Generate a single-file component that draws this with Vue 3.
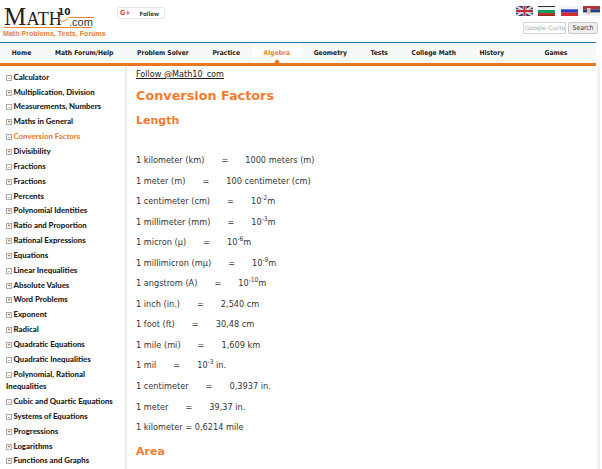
<script setup>
const nav = [
  { t: 'Home' }, { t: 'Math Forum/Help' }, { t: 'Problem Solver' },
  { t: 'Practice' }, { t: 'Algebra', active: true }, { t: 'Geometry' },
  { t: 'Tests' }, { t: 'College Math' }, { t: 'History' }, { t: 'Games' }
]
const side = [
  ['Calculator', 'm'], ['Multiplication, Division', 'p'], ['Measurements, Numbers', 'm'], ['Maths in General', 'p'],
  ['Conversion Factors', 'm', true], ['Divisibility', 'p'], ['Fractions', 'm'], ['Fractions', 'p'], ['Percents', 'm'],
  ['Polynomial Identities', 'p'], ['Ratio and Proportion', 'p'], ['Rational Expressions', 'p'], ['Equations', 'p'],
  ['Linear Inequalities', 'm'], ['Absolute Values', 'p'], ['Word Problems', 'p'], ['Exponent', 'p'], ['Radical', 'p'],
  ['Quadratic Equations', 'p'], ['Quadratic Inequalities', 'm'], ['Polynomial, Rational Inequalities', 'm'],
  ['Cubic and Quartic Equations', 'm'], ['Systems of Equations', 'm'], ['Progressions', 'p'], ['Logarithms', 'p'], ['Functions and Graphs', 'p']
]
const rows = [
  ['1 kilometer (km)', '1000 meters (m)'], ['1 meter (m)', '100 centimeter (cm)'],
  ['1 centimeter (cm)', '10', '-2', 'm'], ['1 millimeter (mm)', '10', '-3', 'm'],
  ['1 micron (µ)', '10', '-6', 'm'], ['1 millimicron (mµ)', '10', '-9', 'm'],
  ['1 angstrom (A)', '10', '-10', 'm'], ['1 inch (in.)', '2,540 cm'], ['1 foot (ft)', '30,48 cm'],
  ['1 mile (mi)', '1,609 km'], ['1 mil', '10', '-3', ' in.'], ['1 centimeter', '0,3937 in.'], ['1 meter', '39,37 in.']
]
</script>

<template>
  <div class="page">
    <header class="top">
      <div class="logo">
        <div class="logo-main">
          <span class="m">Math</span>
          <div class="logo-side">
            <svg class="check" width="12" height="8" viewBox="0 0 12 8"><path d="M1 1L5 6L11 3" fill="none" stroke="#e8873c" stroke-width="1"/></svg>
            <span class="ten">10</span>
            <span class="com">.com</span>
          </div>
        </div>
        <div class="tag">Math Problems, Tests, Forums</div>
      </div>
      <div class="follow"><span class="gp">G+</span><span>Follow</span></div>
      <div class="tools">
        <div class="flags">
          <svg width="17" height="10" viewBox="0 0 17 10"><rect width="17" height="10" fill="#2b3a78"/><path d="M0 0L17 10M17 0L0 10" stroke="#ddd" stroke-width="2"/><path d="M8.5 0V10M0 5H17" stroke="#ddd" stroke-width="3.5"/><path d="M8.5 0V10M0 5H17" stroke="#c8283c" stroke-width="2"/></svg>
          <svg width="17" height="10" viewBox="0 0 17 10"><rect width="17" height="10" fill="#2f2f2f"/><rect y="1" width="17" height="3" fill="#f4f4f4"/><rect y="4" width="17" height="3" fill="#159a62"/><rect y="7" width="17" height="2.5" fill="#c92f26"/></svg>
          <svg width="17" height="10" viewBox="0 0 17 10"><rect width="17" height="3.4" fill="#f4f4f4"/><rect y="3.3" width="17" height="3.4" fill="#2a3cc0"/><rect y="6.6" width="17" height="3.4" fill="#d32a2a"/></svg>
          <svg width="17" height="10" viewBox="0 0 17 10"><rect width="17" height="3.4" fill="#b5353f"/><rect y="3.3" width="17" height="3.4" fill="#26407c"/><rect y="6.6" width="17" height="3.4" fill="#f0f0f0"/><rect x="4" y="2" width="3.5" height="6" fill="#d8c4a8"/></svg>
        </div>
        <div class="search"><div class="input">Google Custo</div><div class="btn">Search</div></div>
      </div>
    </header>
    <nav class="nav">
      <a v-for="n in nav" :key="n.t" :class="{ on: n.active }">{{ n.t }}</a>
    </nav>
    <div class="body">
      <aside class="side">
        <div v-for="(s, i) in side" :key="i" class="item" :class="{ cur: s[2] }">
          <span class="box">{{ s[1] === 'm' ? '−' : '+' }}</span>{{ s[0] }}
        </div>
      </aside>
      <main class="main">
        <a class="fl">Follow @Math10_com</a>
        <h1>Conversion Factors</h1>
        <h2>Length</h2>
        <p v-for="r in rows" :key="r[0]">
          <span class="l">{{ r[0] }}</span><span class="eq">=</span><span>{{ r[1] }}<template v-if="r.length > 2"><sup>{{ r[2] }}</sup>{{ r[3] }}</template></span>
        </p>
        <p>1 kilometer = 0,6214 mile</p>
        <h2 class="area">Area</h2>
      </main>
    </div>
  </div>
</template>

<style>
html, body { margin: 0; background: #fff; overflow: hidden; }
</style>
<style scoped>
.page { width: 602px; height: 469px; overflow: hidden; font-family: "DejaVu Sans", Verdana, sans-serif; color: #222; background: #fff; }
.top { height: 42px; display: flex; width: 600px; }
.logo { width: 117px; flex: none; padding: 7px 0 0 4px; box-sizing: border-box; }
.logo-main { height: 20px; width: 88px; display: flex; align-items: flex-end; color: #222; border-bottom: 1px solid #e8873c; white-space: nowrap; }
.m { font-family: "Liberation Serif", serif; font-size: 25px; font-variant: small-caps; letter-spacing: 0.2px; line-height: 20px; flex: none; width: 53px; }
.logo-side { position: relative; display: flex; flex-direction: column; align-items: flex-start; height: 20px; }
.check { position: absolute; left: 0; top: 9px; }
.ten { font-size: 9px; font-weight: bold; line-height: 10px; margin-left: 1px; }
.com { font-size: 11px; font-family: "Liberation Sans", sans-serif; color: #333; line-height: 9px; margin-left: 11px; padding: 0 1px; border-top: 1px solid #e8873c; }
.tag { font: bold 7.1px "Liberation Sans", sans-serif; color: #e8803a; margin: 2px 0 0 -1px; white-space: nowrap; }
.follow { margin-top: 7px; width: 44px; height: 10px; border: 1px solid #e6e6e6; border-radius: 2px; display: flex; align-items: center; gap: 9px; padding-left: 2px; font-size: 6px; font-stretch: condensed; font-weight: bold; color: #444; }
.gp { color: #d9483b; font-size: 7px; font-weight: bold; }
.tools { margin-left: auto; display: flex; flex-direction: column; align-items: flex-end; padding-top: 6px; }
.flags { display: flex; gap: 5.5px; }
.search { display: flex; gap: 2px; margin: 6px 2px 0 0; align-items: center; }
.input { width: 40px; height: 10px; border: 1px solid #c9d4e4; font-size: 6px; line-height: 10px; color: #aaa; overflow: hidden; white-space: nowrap; padding-left: 1px; }
.btn { width: 28px; height: 10px; border: 1px solid #c8c8c8; background: #eee; border-radius: 2px; font-size: 6.8px; font-stretch: condensed; line-height: 10px; text-align: center; color: #333; }
.nav { width: 596px; height: 20px; display: flex; border-top: 1px solid #2a78a8; border-bottom: 3px solid #e87722; background: #f7f8f8; }
.nav a { flex: none; padding: 0 11.8px; font-size: 6.7px; font-stretch: condensed; font-weight: bold; line-height: 20px; text-align: center; color: #222; white-space: nowrap; }
.nav a:last-child { flex: 1; }
.nav a.on { color: #f08030; background: #fff; position: relative; }
.nav a.on::after { content: ""; position: absolute; left: 50%; bottom: -1px; width: 4px; height: 4px; margin-left: -2px; background: #e87722; transform: rotate(45deg); }
.body { display: flex; width: 597px; border-right: 3px solid #f2f2f2; }
.side { width: 127px; flex: none; border-right: 2px solid #eee; padding: 4.75px 8px 0 6px; box-sizing: border-box; height: 410px; }
.item { font-family: Lato, sans-serif; font-size: 7.8px; font-weight: 900; line-height: 12.5px; padding-bottom: 2.35px; color: #222; }
.item.cur { color: #f08030; }
.box { display: inline-block; width: 4px; height: 4px; line-height: 4px; border: 1px solid #aaa; font-size: 5px; font-weight: normal; text-align: center; margin-right: 1.5px; color: #444; vertical-align: 0; }
.main { padding-left: 9px; flex: 1; }
.fl { display: block; font-size: 9px; font-stretch: condensed; text-decoration: underline; line-height: 14px; margin-top: 1px; color: #222; }
h1 { font-size: 12.8px; line-height: 18px; color: #f47c30; margin: 6px 0 0; }
h2 { font-size: 11px; line-height: 16px; color: #f47c30; margin: 8px 0 21px; }
p { margin: 0; font-size: 9.1px; font-stretch: condensed; line-height: 20.54px; color: #333; }
.eq { margin: 0 17px; }
sup { font-size: 6.5px; line-height: 0; }
h2.area { margin-top: 6px; }
</style>
